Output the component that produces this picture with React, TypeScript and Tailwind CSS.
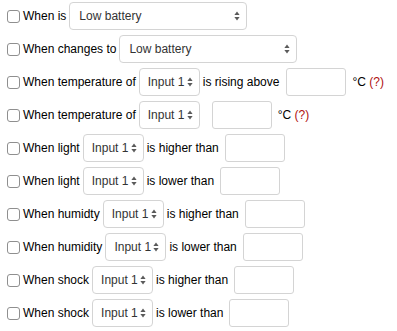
import React from "react";

const font = { fontFamily: '"Liberation Sans", Arial, sans-serif' };

function Check() {
  return <span className="inline-block w-[13px] h-[13px] shrink-0 rounded-[3px] border border-[#8f8f8f] bg-white" />;
}

function Arrows() {
  return (
    <svg width="6" height="10" viewBox="0 0 6 10" className="shrink-0">
      <path d="M3 0.5 L5.6 4 L0.4 4 Z" fill="#5a5a5a" />
      <path d="M3 9.5 L5.6 6 L0.4 6 Z" fill="#5a5a5a" />
    </svg>
  );
}

function Select({ value, wide }: { value: string; wide?: boolean }) {
  return (
    <div
      className={
        "flex items-center h-[28px] shrink-0 rounded-[4px] border border-[#d4d4d4] bg-white text-[12px] text-[#333] " +
        (wide ? "w-[178px] pl-[9px] pr-[6px]" : "w-[61px] pl-[8px] pr-[6px]")
      }
    >
      <span>{value}</span>
      <span className="ml-auto">
        <Arrows />
      </span>
    </div>
  );
}

function Field({ ml = "ml-[6px]" }: { ml?: string }) {
  return <div className={"h-[28px] w-[60px] shrink-0 rounded-[3px] border border-[#d4d4d4] bg-white " + ml} />;
}

function Row({ children }: { children: React.ReactNode }) {
  return <div className="flex items-center h-[28px] mb-[5px] whitespace-nowrap">{children}</div>;
}

function Unit() {
  return (
    <span className="ml-[6px]">
      °C <span className="text-[#b01010]">(?)</span>
    </span>
  );
}

const compare = [
  { what: "light", op: "is higher than" },
  { what: "light", op: "is lower than" },
  { what: "humidty", op: "is higher than" },
  { what: "humidity", op: "is lower than" },
  { what: "shock", op: "is higher than" },
  { what: "shock", op: "is lower than" },
];

export default function App() {
  return (
    <div className="w-[397px] h-[331px] bg-white pl-[7px] pt-[2px] text-[12px] text-black overflow-hidden" style={font}>
      <Row>
        <Check />
        <span className="ml-[3px] mr-[3px]">When is</span>
        <Select value="Low battery" wide />
      </Row>
      <Row>
        <Check />
        <span className="ml-[3px] mr-[3px]">When changes to</span>
        <Select value="Low battery" wide />
      </Row>
      <Row>
        <Check />
        <span className="ml-[3px] mr-[3px]">When temperature of</span>
        <Select value="Input 1" />
        <span className="ml-[3px]">is rising above</span>
        <Field ml="ml-[7px]" />
        <Unit />
      </Row>
      <Row>
        <Check />
        <span className="ml-[3px] mr-[3px]">When temperature of</span>
        <Select value="Input 1" />
        <Field ml="ml-[12px]" />
        <Unit />
      </Row>
      {compare.map((c, i) => (
        <Row key={i}>
          <Check />
          <span className="ml-[3px] mr-[3px]">When {c.what}</span>
          <Select value="Input 1" />
          <span className="ml-[3px]">{c.op}</span>
          <Field />
        </Row>
      ))}
    </div>
  );
}
